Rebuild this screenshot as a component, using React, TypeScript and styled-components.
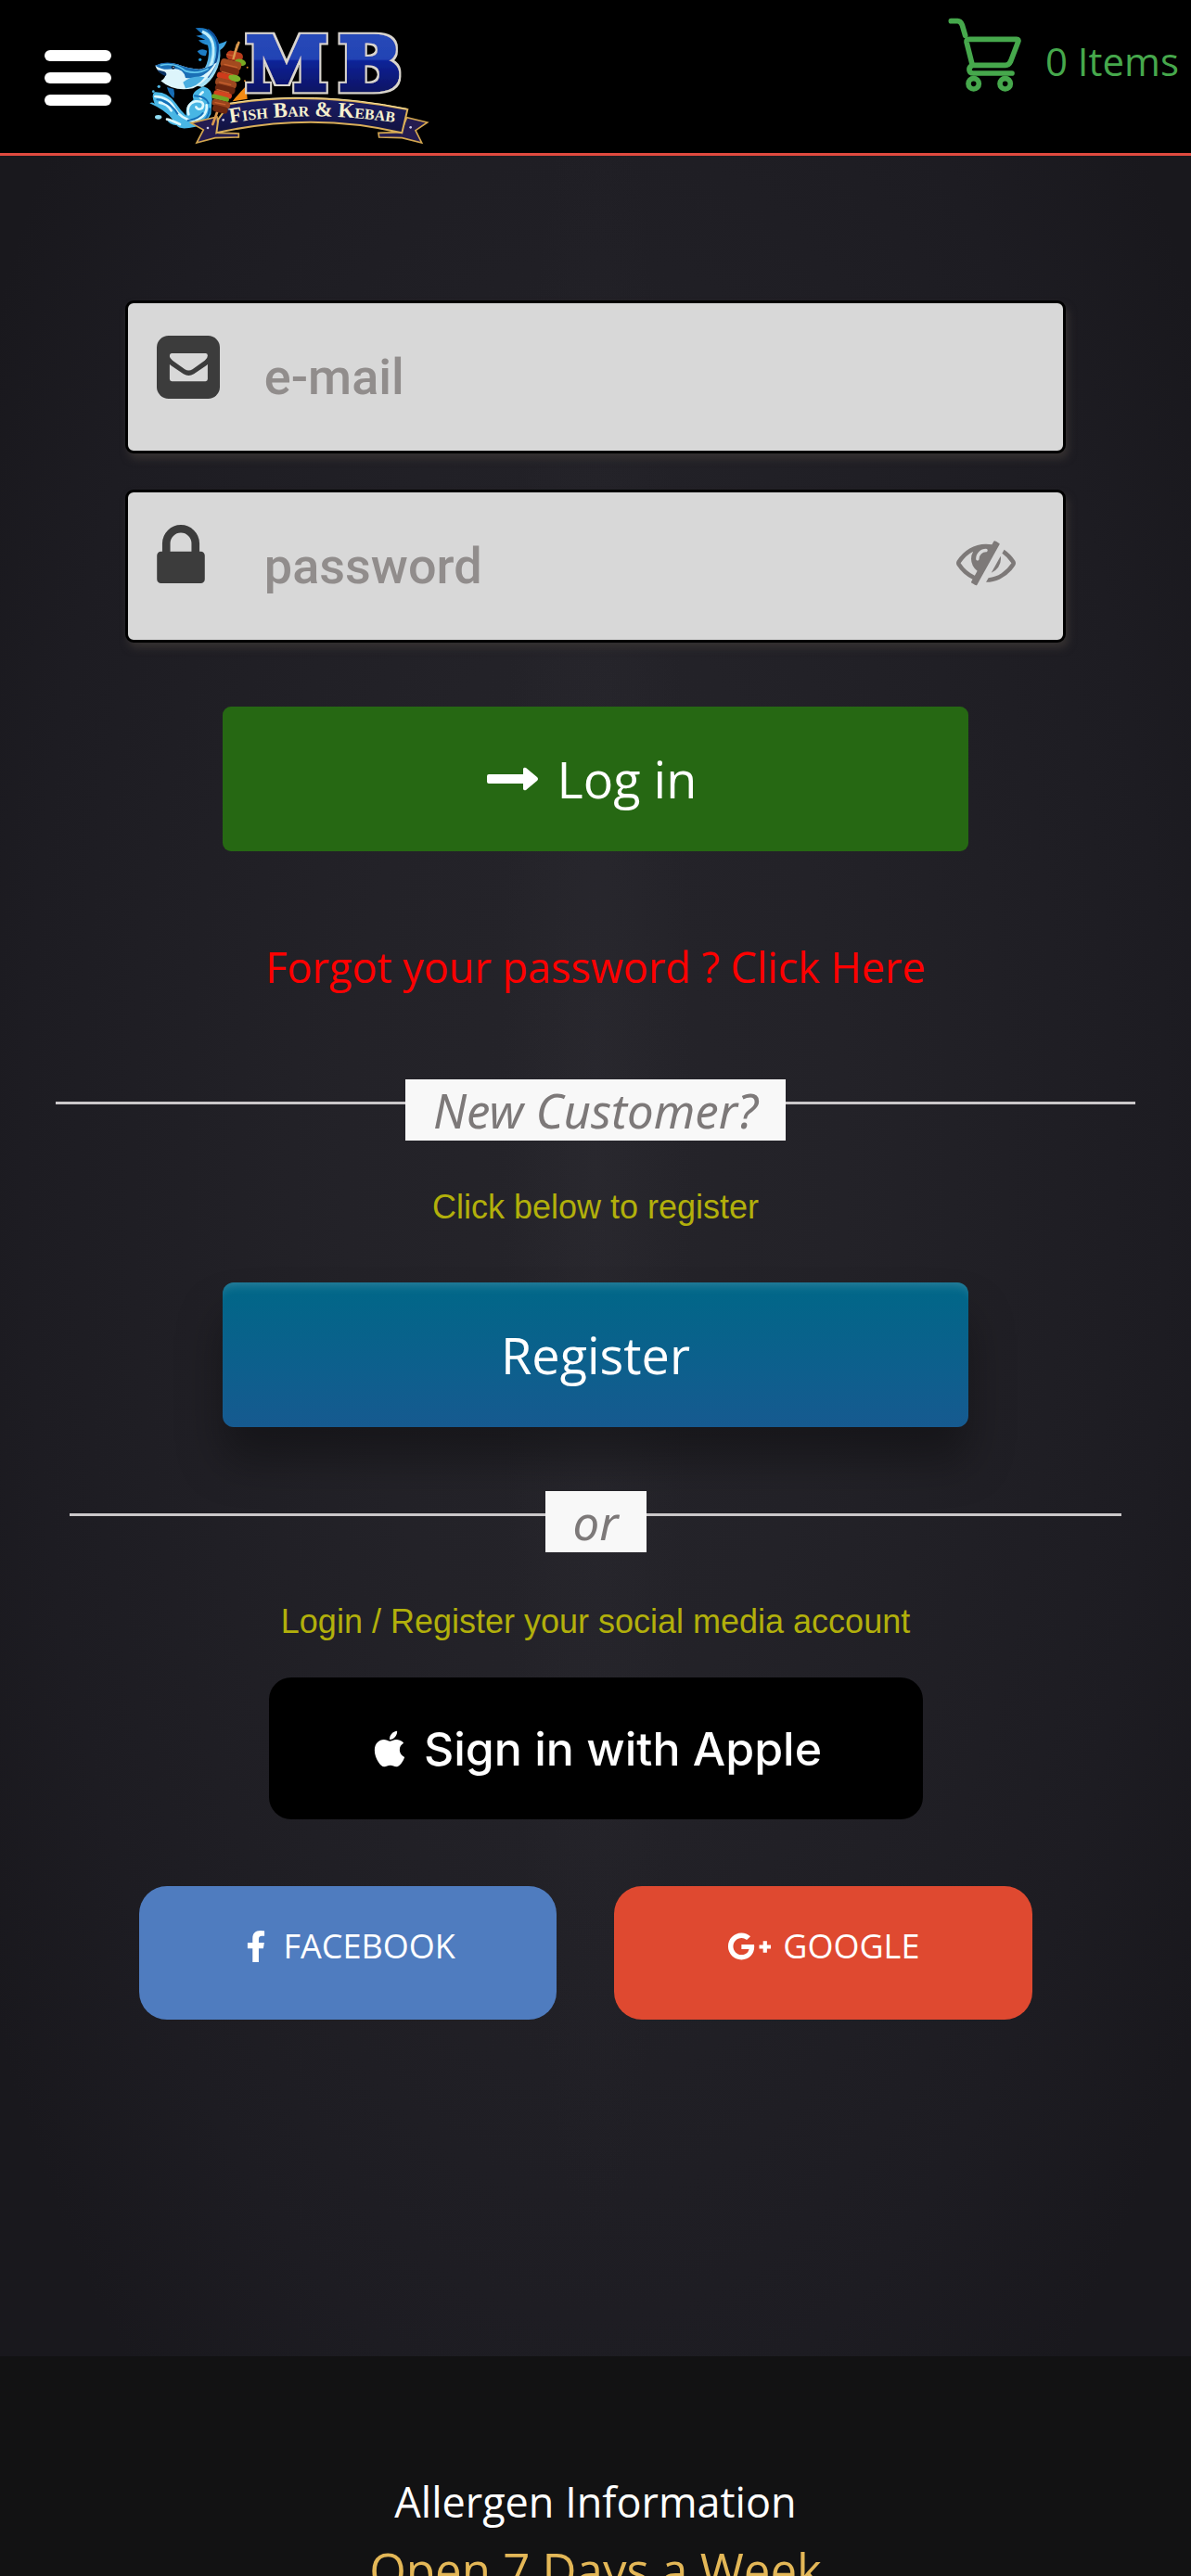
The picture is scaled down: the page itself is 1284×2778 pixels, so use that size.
import { JSX, useState } from 'react'
import styled, { createGlobalStyle } from 'styled-components'
import { FaApple, FaFacebookF, FaGooglePlusG } from 'react-icons/fa'

const GlobalStyle = createGlobalStyle`
  * {
    box-sizing: border-box;
  }

  body {
    margin: 0;
    background: #1b1a20;
    font-family: 'Open Sans', 'Noto Sans', sans-serif;
  }

  button,
  input {
    font-family: inherit;
  }

  a {
    text-decoration: none;
  }
`

// --- Page ---

const Page = styled.div`
  display: flex;
  flex-direction: column;
  height: 100vh;
  overflow-y: auto;
  scrollbar-width: none;
`

const Header = styled.header`
  display: flex;
  flex-shrink: 0;
  align-items: flex-start;
  height: 168px;
  padding: 0 13px 0 48px;
  background: #000;
  border-bottom: 3px solid #e04a3f;
`

const MenuButton = styled.button`
  display: flex;
  flex-direction: column;
  gap: 12px;
  width: 72px;
  margin: 54px 30px 0 0;
  padding: 0;
  background: none;
  border: 0;
  cursor: pointer;

  span {
    height: 12px;
    border-radius: 6px;
    background: #fff;
  }
`

const LogoLink = styled.a`
  padding-top: 20px;

  svg {
    display: block;
  }
`

const CartLink = styled.a`
  display: flex;
  gap: 25px;
  margin-left: auto;
  padding-top: 18px;
  color: #46a84c;
  font-size: 42px;
  line-height: 96px;
`

const Main = styled.main`
  display: flex;
  flex-direction: column;
  flex-shrink: 0;
  align-items: center;
  padding: 156px 0 363px;
  background:
    radial-gradient(ellipse 8% 50% at 50% 45%, rgba(56, 55, 62, 0.2), transparent),
    radial-gradient(ellipse 60% 72% at 50% 46%, #25242a 0%, #232228 35%, #1d1c22 80%, #19181d 100%);
`

// --- Form ---

const LoginForm = styled.form`
  display: flex;
  flex-direction: column;
  align-items: center;
  width: 79%;
`

const Field = styled.label`
  display: flex;
  align-items: flex-start;
  width: 100%;
  height: 165px;
  margin-bottom: 39px;
  background: #d8d8d8;
  border: 3px solid #000;
  border-radius: 9px;
  box-shadow: 3px 6px 9px #343030;
`

const FieldIcon = styled.span`
  width: 116px;
  margin: 35px 0 0 31px;
  color: #3c3c3c;

  svg {
    display: block;
  }
`

const FieldInput = styled.input`
  flex: 1;
  min-width: 0;
  height: 100%;
  padding: 0;
  background: none;
  border: 0;
  outline: 0;
  color: #3c3c3c;
  font-family: Roboto, sans-serif;
  font-size: 54px;
  font-weight: 500;

  &::placeholder {
    color: #918d8c;
    opacity: 1;
  }
`

const RevealButton = styled.button`
  margin: 42px 51px 0 0;
  padding: 0;
  background: none;
  border: 0;
  color: #7d7978;
  cursor: pointer;

  svg {
    display: block;
  }
`

const WideButton = styled.button<{ $variant: 'login' | 'register' }>`
  display: flex;
  align-items: center;
  justify-content: center;
  gap: 20px;
  width: 804px;
  max-width: 90%;
  height: 156px;
  padding: 0 8px 0 0;
  border: 0;
  border-radius: ${(props) => (props.$variant === 'login' ? '9px' : '12px')};
  background: ${(props) =>
    props.$variant === 'login' ? '#266813' : 'linear-gradient(#006788, #165a90)'};
  box-shadow: ${(props) =>
    props.$variant === 'login'
      ? 'none'
      : '0 36px 48px rgba(0, 0, 0, 0.34), inset 0 12px 12px -9px rgba(255, 255, 255, 0.18)'};
  color: #fff;
  font-size: 54px;
  cursor: pointer;
`

const LoginButton = styled(WideButton)`
  margin-top: 30px;
`

const RegisterButton = styled(WideButton)`
  padding: 0;
`

const ForgotLink = styled.a`
  margin: 92px 0 88px;
  color: #f00;
  font-size: 45px;
  line-height: 66px;
`

const Divider = styled.div<{ $inset: number; $space: number }>`
  display: flex;
  align-self: stretch;
  margin: 0 ${(props) => props.$inset}px ${(props) => props.$space}px;

  &::before,
  &::after {
    content: '';
    flex: 1;
    height: 3px;
    margin-top: 24px;
    background: #cbc8ca;
  }
`

const DividerLabel = styled.span`
  padding: 0 30px;
  background: #f8f8f8;
  color: #7d7979;
  font-family: 'Noto Sans', sans-serif;
  font-size: 51px;
  font-style: italic;
  line-height: 66px;
`

const Hint = styled.p<{ $space: number }>`
  margin: 0 0 ${(props) => props.$space}px;
  color: #b2b00b;
  font-family: 'Liberation Sans', Arial, sans-serif;
  font-size: 36px;
  line-height: 54px;
`

const OrDivider = styled(Divider)`
  margin-top: 69px;
`

// --- Social login ---

const AppleButton = styled.button`
  display: flex;
  align-items: center;
  justify-content: center;
  gap: 15px;
  width: 705px;
  max-width: 90%;
  height: 153px;
  margin-bottom: 72px;
  background: #000;
  border: 0;
  border-radius: 24px;
  color: #fff;
  font-family: Inter, sans-serif;
  font-size: 50px;
  font-weight: 500;
  cursor: pointer;
`

const SocialRow = styled.div`
  display: grid;
  grid-template-columns: 1fr 1fr;
  gap: 62px;
  width: 79%;
  padding: 0 36px 0 15px;
`

const SocialButton = styled.button<{ $color: string }>`
  display: flex;
  align-items: center;
  justify-content: center;
  gap: 12px;
  height: 144px;
  padding: 0 0 15px;
  background: ${(props) => props.$color};
  border: 0;
  border-radius: 30px;
  color: #fff;
  font-size: 36px;
  font-weight: 500;
  cursor: pointer;
`

// --- Footer ---

const Footer = styled.footer`
  display: flex;
  flex: 1 0 auto;
  flex-direction: column;
  align-items: center;
  padding: 124px 0 60px;
  background: #121213;
`

const FooterLink = styled.a`
  color: #fff;
  font-size: 45px;
  line-height: 66px;
`

const OpeningTitle = styled.h2`
  margin: 0;
  color: #e3b757;
  font-size: 51px;
  font-weight: 500;
  line-height: 81px;
`

// --- Drawings ---

const Logo = (): JSX.Element => (
  <svg width="320" height="140" viewBox="0 0 960 420" role="img" aria-label="MB Fish Bar & Kebab">
    <defs>
      <linearGradient id="letters" gradientUnits="userSpaceOnUse" x1="0" y1="50" x2="0" y2="240">
        <stop offset="0" stopColor="#2849b8" />
        <stop offset="0.43" stopColor="#2243b4" />
        <stop offset="0.46" stopColor="#0c2398" />
        <stop offset="1" stopColor="#0a1362" />
      </linearGradient>
      <filter id="outline" x="-10%" y="-10%" width="120%" height="120%">
        <feMorphology in="SourceAlpha" operator="dilate" radius="6" result="wide" />
        <feFlood floodColor="#d9d5ce" />
        <feComposite in2="wide" operator="in" result="edge" />
        <feMerge>
          <feMergeNode in="edge" />
          <feMergeNode in="SourceGraphic" />
        </feMerge>
      </filter>
      <linearGradient id="fish" x1="0" y1="0" x2="0.4" y2="1">
        <stop offset="0" stopColor="#1269b4" />
        <stop offset="0.5" stopColor="#2f9bdc" />
        <stop offset="1" stopColor="#bdeefa" />
      </linearGradient>
      <linearGradient id="ribbon" x1="0" y1="0" x2="0" y2="1">
        <stop offset="0" stopColor="#1b1d66" />
        <stop offset="1" stopColor="#11123f" />
      </linearGradient>
      <path id="bannerLine" d="M294 338Q560 292 864 342" />
    </defs>

    {/* leaping fish */}
    <path
      d="M182 31Q214 26 238 46Q254 64 258 82Q274 78 284 72Q278 92 262 102Q266 140 246 176Q232 204 204 222L172 214Q204 184 218 148Q230 112 222 86Q200 82 192 70L214 68L184 56L206 52Z"
      fill="url(#fish)"
    />
    <path d="M204 42Q238 56 240 96Q244 140 214 184" fill="none" stroke="#bfeefb" strokeWidth="9" />
    <path d="M222 36Q258 60 254 104Q252 150 222 190" fill="none" stroke="#0d4e98" strokeWidth="7" />
    <path d="M188 106Q202 94 220 104L216 120Q200 124 188 106Z" fill="#1d7cc4" />
    <circle cx="197" cy="133" r="5" fill="#2397d8" />

    {/* splash */}
    <path
      d="M34 274Q44 268 50 276Q38 246 50 238Q94 236 120 276Q136 300 152 314Q148 282 176 262Q164 238 208 220Q238 226 236 262L232 310Q214 344 182 350Q130 362 122 346Q96 344 88 324Q98 330 108 326Q84 296 34 274Z"
      fill="#48b6e4"
    />
    <path
      d="M52 252Q96 254 114 290Q134 324 176 332M160 310Q150 278 182 268Q216 266 204 290Q190 298 184 286M132 342Q96 326 90 326M184 328Q222 314 218 280M66 272Q92 276 104 298M206 238Q190 250 200 258"
      fill="none"
      stroke="#dcf8fd"
      strokeWidth="8"
      strokeLinecap="round"
    />
    <path
      d="M78 268Q110 282 124 308M158 330Q194 324 206 306M180 250Q216 252 224 274M58 262Q84 262 104 284M196 340Q226 322 228 292"
      fill="none"
      stroke="#1470b8"
      strokeWidth="6"
      strokeLinecap="round"
    />
    <ellipse cx="62" cy="319" rx="11" ry="7" fill="#8fdcf2" />
    <circle cx="64" cy="220" r="5" fill="#4fb6e4" />
    <circle cx="46" cy="236" r="4" fill="#4fb6e4" />
    <circle cx="106" cy="310" r="5" fill="#4fb6e4" />

    {/* big fish */}
    <path
      d="M52 152Q84 138 124 148Q158 162 194 164Q222 160 252 142Q224 204 174 226Q112 238 70 202Q86 192 84 182Q60 176 52 152Z"
      fill="#ddf5fb"
    />
    <path
      d="M52 152Q84 136 124 148Q158 162 194 164Q224 158 244 146Q210 200 150 192Q144 162 112 162Q78 170 52 152Z"
      fill="#1a6fb6"
    />
    <path d="M68 152Q114 140 150 170Q190 182 224 162" fill="none" stroke="#63c8ee" strokeWidth="5" />
    <path d="M58 166Q70 182 86 186Q92 178 82 172Z" fill="#0b3364" />
    <path d="M142 206Q174 180 212 190Q188 222 150 226Z" fill="#49aee0" />
    <path d="M90 222Q96 246 112 258Q116 240 112 228Z" fill="#156cb4" />
    <circle cx="110" cy="158" r="6" fill="#09213f" />
    <circle cx="111" cy="157" r="2" fill="#fff" />

    {/* ribbon tails */}
    <path
      d="M168 338L252 318L258 370L322 372L322 384L246 386L186 402L208 360Z"
      fill="#251c50"
      stroke="#d3a650"
      strokeWidth="5"
    />
    <path
      d="M932 336L866 320L846 368L774 370L776 384L850 386L914 402L894 362Z"
      fill="#251c50"
      stroke="#d3a650"
      strokeWidth="5"
    />

    {/* flame behind the ribbon */}
    <path d="M302 268Q326 238 346 218L350 260Z" fill="#f28a12" />
    <path
      d="M256 326L292 276Q560 232 868 294L850 370Q560 300 250 370Z"
      fill="url(#ribbon)"
      stroke="#d9ae59"
      strokeWidth="6"
    />
    <path d="M292 274Q560 230 866 292" fill="none" stroke="#f8e2a0" strokeWidth="3" />

    {/* kebab skewer */}
    <path d="M322 78L308 116M252 304L238 342" stroke="#d9984d" strokeWidth="8" strokeLinecap="round" />
    <g transform="rotate(14 280 200)">
      <rect x="262" y="102" width="54" height="30" rx="14" fill="#b83c1c" />
      <ellipse cx="312" cy="132" rx="18" ry="11" fill="#78a823" />
      <rect x="250" y="132" width="68" height="28" rx="12" fill="#a34a1f" />
      <rect x="252" y="154" width="64" height="24" rx="11" fill="#7b2d12" />
      <rect x="248" y="178" width="64" height="20" rx="9" fill="#cf3b1b" />
      <ellipse cx="306" cy="186" rx="20" ry="11" fill="#7bb12a" />
      <rect x="248" y="196" width="70" height="26" rx="12" fill="#9c4820" />
      <rect x="252" y="216" width="66" height="24" rx="11" fill="#6b260f" />
      <rect x="252" y="238" width="60" height="18" rx="9" fill="#d24520" />
      <rect x="248" y="252" width="58" height="15" rx="7" fill="#70a524" />
      <rect x="254" y="266" width="60" height="22" rx="10" fill="#9a441d" />
      <rect x="260" y="284" width="50" height="22" rx="10" fill="#6d2810" />
    </g>
    <path
      d="M284 116L310 122M276 148L316 158M268 172L302 182M260 206L296 214M252 230L290 240M246 272L278 278"
      stroke="#c8602f"
      strokeWidth="4"
      strokeLinecap="round"
    />
    <path d="M304 132L318 82" stroke="#d9984d" strokeWidth="7" />
    <circle cx="350" cy="158" r="3" fill="#e08a25" />
    <circle cx="342" cy="202" r="3" fill="#e08a25" />

    {/* name */}
    <g
      fill="url(#letters)"
      stroke="url(#letters)"
      strokeWidth="15"
      filter="url(#outline)"
      fontFamily="'DejaVu Serif', serif"
      fontWeight="bold"
      fontSize="238"
    >
      <text x="346" y="232">
        M
      </text>
      <text x="646" y="232">
        B
      </text>
    </g>
    <text
      fill="#f6f0cf"
      fontFamily="'Liberation Serif', serif"
      fontWeight="bold"
      fontSize="69"
      fontVariant="small-caps"
    >
      <textPath href="#bannerLine">Fish Bar &amp; Kebab</textPath>
    </text>
    <circle cx="272" cy="328" r="4" fill="#c9c8ea" />
    <circle cx="222" cy="354" r="4" fill="#c9c8ea" />
    <circle cx="878" cy="352" r="4" fill="#c9c8ea" />
  </svg>
)

const CartIcon = (): JSX.Element => (
  <svg width="80" height="82" viewBox="0 0 240 246" fill="none" stroke="currentColor" strokeWidth="17">
    <path d="M10 14H31Q41 14 46 27L56 61" strokeLinecap="round" />
    <path d="M69 73H222Q230 73 227 81L203 144Q197 157 186 157H79L60 82Q59 73 69 73Z" />
    <path d="M77 158Q67 165 69 174Q71 183 82 183H207" strokeLinecap="round" />
    <circle cx="83" cy="217" r="17" />
    <circle cx="185" cy="217" r="17" />
  </svg>
)

const MailIcon = (): JSX.Element => (
  <svg width="68" height="68" viewBox="0 0 1536 1536">
    <rect width="1536" height="1536" rx="288" fill="currentColor" />
    <path
      d="M368 431H1186Q1240 431 1240 485Q1240 550 1170 603L870 816Q777 880 684 816L384 603Q314 550 314 500Q314 431 368 431ZM314 696Q330 716 366 742L650 930Q777 1010 904 930L1188 742Q1224 716 1240 696V1058Q1240 1112 1186 1112H368Q314 1112 314 1058Z"
      fill="#d8d8d8"
    />
  </svg>
)

const LockIcon = (): JSX.Element => (
  <svg width="52" height="63" viewBox="320 128 1152 1408" fill="currentColor">
    <path d="M640 768h512v-192q0-106-75-181t-181-75-181 75-75 181v192zm832 96v576q0 40-28 68t-68 28h-960q-40 0-68-28t-28-68v-576q0-40 28-68t68-28h32v-192q0-184 132-316t316-132 316 132 132 316v192h32q40 0 68 28t28 68z" />
  </svg>
)

const EyeSlashIcon = (): JSX.Element => (
  <svg width="64" height="64" viewBox="0 0 1792 1792" fill="currentColor">
    <path d="M555 1335l78-141q-87-63-136-159t-49-203q0-121 61-225-229 117-381 353 167 258 427 375zm389-759q0-20-14-34t-34-14q-125 0-214.5 89.5t-89.5 214.5q0 20 14 34t34 14 34-14 14-34q0-86 61-147t147-61q20 0 34-14t14-34zm363-191q0 7-1 9-106 189-316 567t-315 566l-49 89q-10 16-28 16-12 0-134-70-16-10-16-28 0-12 44-87-143-65-263.5-173t-208.5-245q-20-31-20-69t20-69q153-235 380-371t496-136q89 0 180 17l54-97q10-16 28-16 5 0 18 6t31 15.5 33 18.5 31.5 18.5 19.5 11.5q16 10 16 27zm37 447q0 139-79 253.5t-209 164.5l280-502q8 45 8 84zm448 128q0 35-20 69-39 64-109 145-150 172-347.5 267t-419.5 95l74-132q212-18 392.5-137t301.5-307q-115-179-282-294l63-112q95 64 182.5 153t144.5 182q20 34 20 69z" />
  </svg>
)

const ArrowIcon = (): JSX.Element => (
  <svg width="56" height="26" viewBox="0 0 56 26" fill="currentColor">
    <path d="M2 8H39V2Q40 0 42 1L54 11Q56 13 54 15L42 25Q40 26 39 24V18H2Q0 18 0 16V10Q0 8 2 8Z" />
  </svg>
)

export default function App(): JSX.Element {
  const [showPassword, setShowPassword] = useState(false)

  return (
    <Page>
      <GlobalStyle />
      <Header>
        <MenuButton type="button" aria-label="Menu">
          <span />
          <span />
          <span />
        </MenuButton>
        <LogoLink href="#home">
          <Logo />
        </LogoLink>
        <CartLink href="#cart">
          <CartIcon />
          <span>0 Items</span>
        </CartLink>
      </Header>

      <Main>
        <LoginForm onSubmit={(e) => e.preventDefault()}>
          <Field>
            <FieldIcon>
              <MailIcon />
            </FieldIcon>
            <FieldInput type="email" placeholder="e-mail" aria-label="e-mail" />
          </Field>
          <Field>
            <FieldIcon>
              <LockIcon />
            </FieldIcon>
            <FieldInput
              type={showPassword ? 'text' : 'password'}
              placeholder="password"
              aria-label="password"
            />
            <RevealButton
              type="button"
              aria-label="Show password"
              onClick={() => setShowPassword(!showPassword)}
            >
              <EyeSlashIcon />
            </RevealButton>
          </Field>
          <LoginButton type="submit" $variant="login">
            <ArrowIcon />
            Log in
          </LoginButton>
        </LoginForm>

        <ForgotLink href="#forgot">Forgot your password ? Click Here</ForgotLink>

        <Divider $inset={60} $space={45}>
          <DividerLabel>New Customer?</DividerLabel>
        </Divider>
        <Hint $space={54}>Click below to register</Hint>
        <RegisterButton type="button" $variant="register">
          Register
        </RegisterButton>

        <OrDivider $inset={75} $space={48}>
          <DividerLabel>or</DividerLabel>
        </OrDivider>
        <Hint $space={33}>Login / Register your social media account</Hint>
        <AppleButton type="button">
          <FaApple size={44} />
          Sign in with Apple
        </AppleButton>
        <SocialRow>
          <SocialButton type="button" $color="#4f7cbf">
            <FaFacebookF size={34} />
            FACEBOOK
          </SocialButton>
          <SocialButton type="button" $color="#df4930">
            <FaGooglePlusG size={48} />
            GOOGLE
          </SocialButton>
        </SocialRow>
      </Main>

      <Footer>
        <FooterLink href="#allergens">Allergen Information</FooterLink>
        <OpeningTitle>Open 7 Days a Week</OpeningTitle>
      </Footer>
    </Page>
  )
}
